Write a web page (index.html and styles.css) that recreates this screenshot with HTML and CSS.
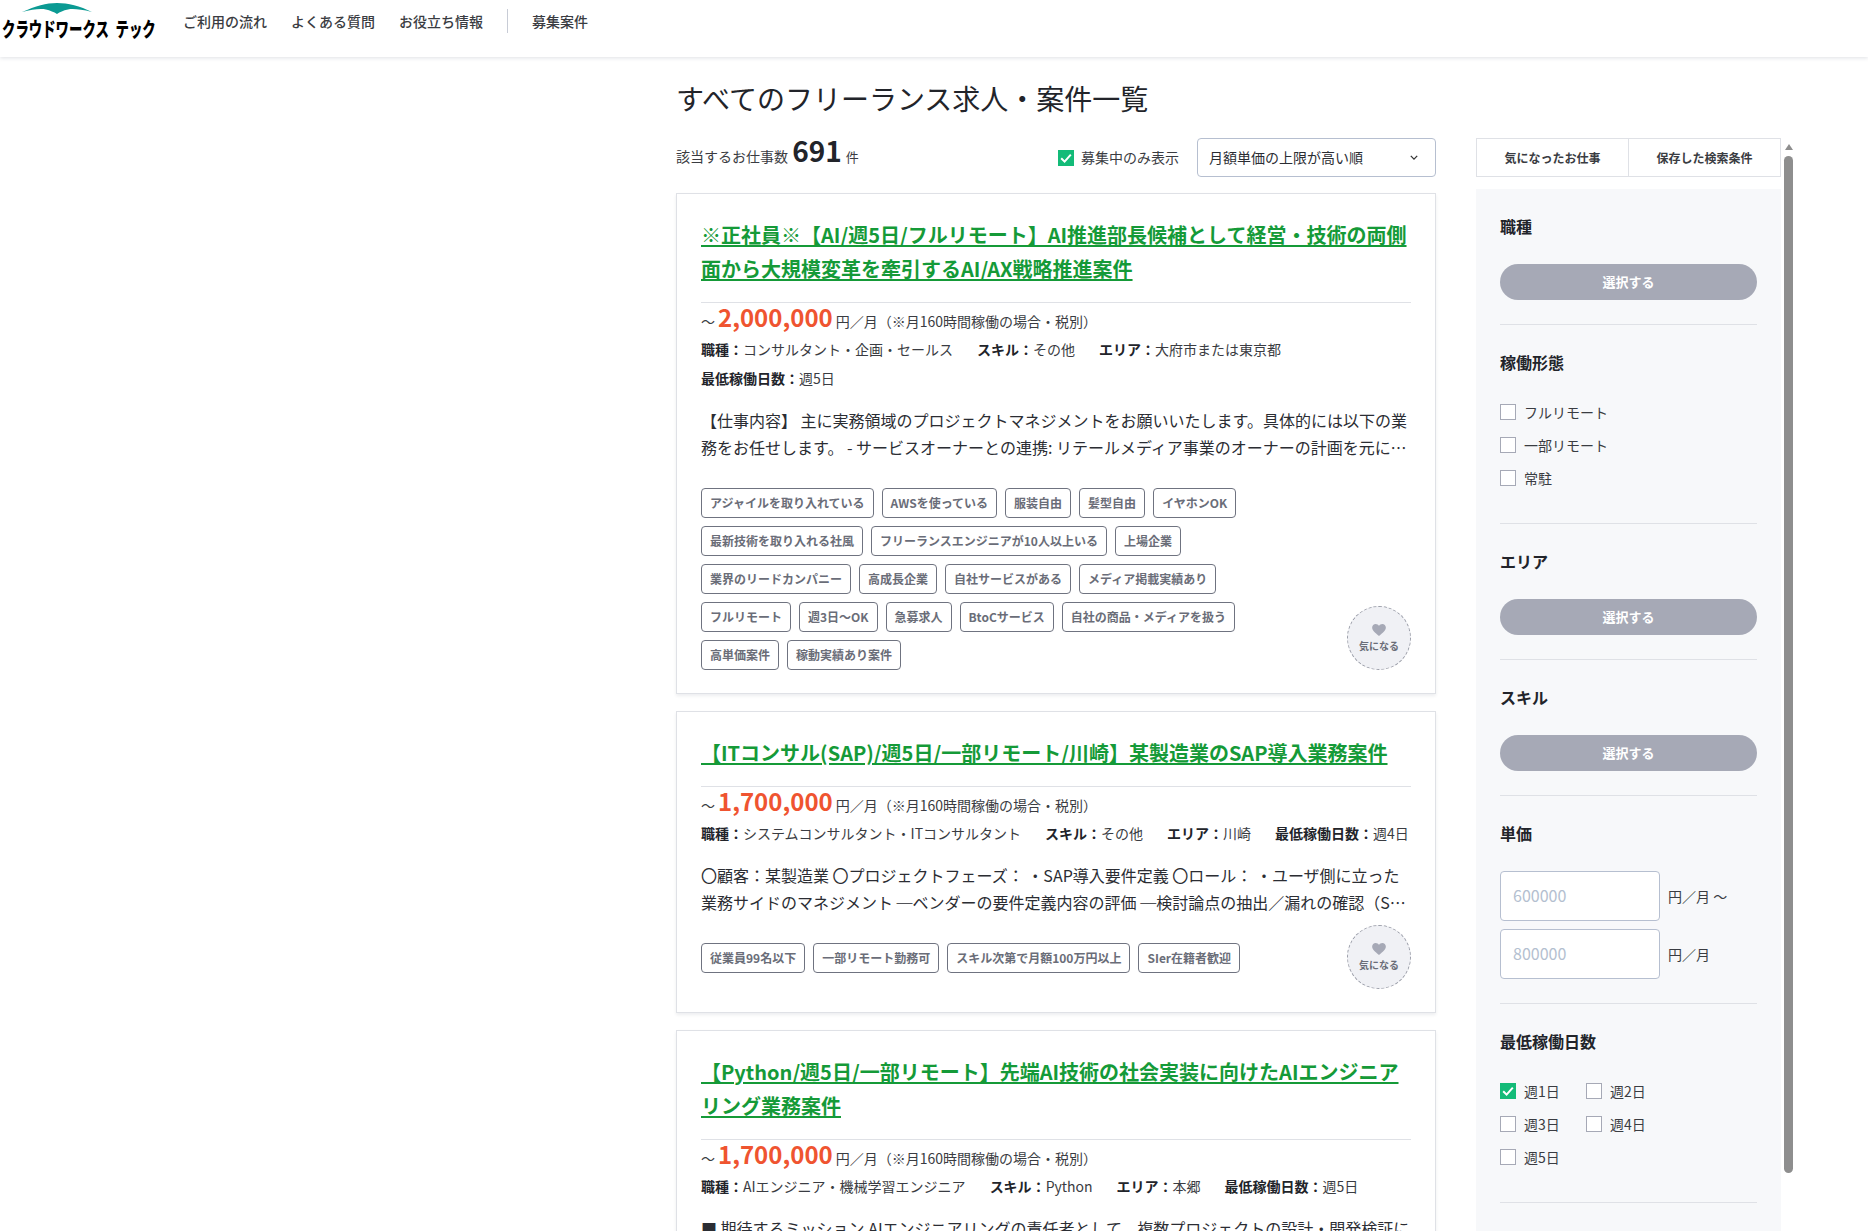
FILE: index.html
```html
<!DOCTYPE html>
<html lang="ja">
<head>
<meta charset="utf-8">
<title>すべてのフリーランス求人・案件一覧</title>
<link rel="stylesheet" href="styles.css">
</head>
<body>
<header class="header">
  <a class="logo">
    <svg class="logo-arc" viewBox="0 0 70 11" width="70" height="11"><path d="M0 9 C14 3 24 0 35 0 C46 0 58 3 70 9 C58 6 50 5.500 46 6.500 C41 7.500 38 9 35 11 C32 9 28 7.500 24 6.500 C18 5.500 10 6.500 0 9Z" fill="#0b9a93"/></svg>
    <span class="logo-text">クラウドワークス<span class="logo-gap">テック</span></span>
  </a>
  <nav class="nav">
    <a>ご利用の流れ</a><a>よくある質問</a><a>お役立ち情報</a><span class="nav-sep"></span><a>募集案件</a>
  </nav>
</header>
<div class="layout">
  <main class="main">
    <h1 class="page-title">すべてのフリーランス求人・案件一覧</h1>
    <div class="toolbar">
      <div class="count">該当するお仕事数 <b>691</b> <small>件</small></div>
      <label class="only-open"><span class="box on"><svg viewBox="0 0 16 16"><path d="M3.2 8.2 6.6 11.6 12.8 4.6" fill="none" stroke="#fff" stroke-width="2"/></svg></span><span class="lift">募集中のみ表示</span></label>
      <div class="select"><span class="lift">月額単価の上限が高い順</span><svg viewBox="0 0 10 6" width="8" height="5"><path d="M1 1 5 5 9 1" fill="none" stroke="#333" stroke-width="1.6"/></svg></div>
    </div>

    <article class="card">
      <h2 class="job-title"><a>※正社員※【AI/週5日/フルリモート】AI推進部長候補として経営・技術の両側面から大規模変革を牽引するAI/AX戦略推進案件</a></h2>
      <p class="price">〜<b>2,000,000</b><span>円／月（※月160時間稼働の場合・税別）</span></p>
      <ul class="meta"><li><b>職種：</b>コンサルタント・企画・セールス</li><li><b>スキル：</b>その他</li><li><b>エリア：</b>大府市または東京都</li><li><b>最低稼働日数：</b>週5日</li></ul>
      <p class="desc">【仕事内容】 主に実務領域のプロジェクトマネジメントをお願いいたします。具体的には以下の業務をお任せします。 - サービスオーナーとの連携: リテールメディア事業のオーナーの計画を元に、開発チームと連携して進めていただきます。</p>
      <div class="tags"><span>アジャイルを取り入れている</span><span>AWSを使っている</span><span>服装自由</span><span>髪型自由</span><span>イヤホンOK</span><span>最新技術を取り入れる社風</span><span>フリーランスエンジニアが10人以上いる</span><span>上場企業</span><span>業界のリードカンパニー</span><span>高成長企業</span><span>自社サービスがある</span><span>メディア掲載実績あり</span><span>フルリモート</span><span>週3日〜OK</span><span>急募求人</span><span>BtoCサービス</span><span>自社の商品・メディアを扱う</span><span>高単価案件</span><span>稼動実績あり案件</span></div>
      <button class="fav"><svg viewBox="0 0 16 14" width="14" height="12"><path d="M8 14C3 10 0 7.500 0 4.200 0 1.800 1.900 0 4.100 0 5.700 0 7.200.8 8 2.200 8.800.8 10.300 0 11.900 0 14.100 0 16 1.800 16 4.200 16 7.500 13 10 8 14Z" fill="#a6a9b6"/></svg><span>気になる</span></button>
    </article>

    <article class="card">
      <h2 class="job-title"><a>【ITコンサル(SAP)/週5日/一部リモート/川崎】某製造業のSAP導入業務案件</a></h2>
      <p class="price">〜<b>1,700,000</b><span>円／月（※月160時間稼働の場合・税別）</span></p>
      <ul class="meta"><li><b>職種：</b>システムコンサルタント・ITコンサルタント</li><li><b>スキル：</b>その他</li><li><b>エリア：</b>川崎</li><li><b>最低稼働日数：</b>週4日</li></ul>
      <p class="desc">〇顧客：某製造業 〇プロジェクトフェーズ： ・SAP導入要件定義 〇ロール： ・ユーザ側に立った業務サイドのマネジメント ─ベンダーの要件定義内容の評価 ─検討論点の抽出／漏れの確認（SAP標準機能との適合性の確認を含みます）</p>
      <div class="tags"><span>従業員99名以下</span><span>一部リモート勤務可</span><span>スキル次第で月額100万円以上</span><span>SIer在籍者歓迎</span></div>
      <button class="fav"><svg viewBox="0 0 16 14" width="14" height="12"><path d="M8 14C3 10 0 7.500 0 4.200 0 1.800 1.900 0 4.100 0 5.700 0 7.200.8 8 2.200 8.800.8 10.300 0 11.900 0 14.100 0 16 1.800 16 4.200 16 7.500 13 10 8 14Z" fill="#a6a9b6"/></svg><span>気になる</span></button>
    </article>

    <article class="card">
      <h2 class="job-title"><a>【Python/週5日/一部リモート】先端AI技術の社会実装に向けたAIエンジニアリング業務案件</a></h2>
      <p class="price">〜<b>1,700,000</b><span>円／月（※月160時間稼働の場合・税別）</span></p>
      <ul class="meta"><li><b>職種：</b>AIエンジニア・機械学習エンジニア</li><li><b>スキル：</b>Python</li><li><b>エリア：</b>本郷</li><li><b>最低稼働日数：</b>週5日</li></ul>
      <p class="desc">■ 期待するミッション AIエンジニアリングの責任者として、複数プロジェクトの設計・開発検証に携わっていただきます。</p>
    </article>
  </main>

  <aside class="side">
    <div class="side-col">
      <div class="tabs"><a>気になったお仕事</a><a>保存した検索条件</a></div>
      <form class="panel">
        <section class="sec"><h3>職種</h3><button type="button" class="pick">選択する</button></section>
        <section class="sec"><h3>稼働形態</h3>
          <div class="checks"><label><span class="box"></span>フルリモート</label><label><span class="box"></span>一部リモート</label><label><span class="box"></span>常駐</label></div>
        </section>
        <section class="sec"><h3>エリア</h3><button type="button" class="pick">選択する</button></section>
        <section class="sec"><h3>スキル</h3><button type="button" class="pick">選択する</button></section>
        <section class="sec"><h3>単価</h3>
          <div class="price-row"><span class="input">600000</span>円／月 〜</div>
          <div class="price-row"><span class="input">800000</span>円／月</div>
        </section>
        <section class="sec"><h3>最低稼働日数</h3>
          <div class="checks days">
            <label><span class="box on"><svg viewBox="0 0 16 16"><path d="M3.200 8.200 6.600 11.600 12.800 4.600" fill="none" stroke="#fff" stroke-width="2"/></svg></span>週1日</label><label><span class="box"></span>週2日</label>
            <label><span class="box"></span>週3日</label><label><span class="box"></span>週4日</label>
            <label><span class="box"></span>週5日</label>
          </div>
        </section>
      </form>
    </div>
    <div class="scrollbar"><span class="arrow"></span><span class="thumb"></span></div>
  </aside>
</div>
</body>
</html>
```
FILE: styles.css
```css
* { box-sizing: border-box; }
html, body { margin: 0; height: 1231px; overflow: hidden; background: #fff; }
body { font-family: "Noto Sans CJK JP", "Noto Sans", sans-serif; color: #2b2d33; font-size: 14px; }
h1, h2, h3, p, ul { margin: 0; padding: 0; list-style: none; font-weight: inherit; }

.header { height: 57px; display: flex; align-items: flex-start; background: #fff; box-shadow: 0 1px 4px rgba(30, 40, 70, .14); }
.logo { width: 183px; height: 57px; padding: 3px 0 0 2px; display: flex; flex-direction: column; flex: none; }
.logo-arc { margin-left: 20px; display: block; }
.logo-text { font-size: 20px; line-height: 24px; margin-top: 3px; font-weight: 900; color: #000; transform: scaleX(.67); transform-origin: left center; white-space: nowrap; }
.logo-gap { margin-left: 10px; }
.nav { display: flex; align-items: center; gap: 24px; font-size: 14px; font-weight: 500; color: #3a3c42; height: 42px; }
.nav-sep { width: 1px; height: 24px; background: #c8ccd6; }

.layout { display: flex; padding-left: 676px; }
.main { width: 760px; flex: none; }
.page-title { font-size: 28px; line-height: 40px; margin-top: 21px; font-weight: 400; color: #22242a; }
.toolbar { display: flex; align-items: center; height: 39px; margin-top: 20px; }
.count { flex: 1; font-size: 14px; color: #3a3c42; padding-bottom: 16px; }
.count b { font-size: 28px; line-height: 34px; font-weight: 700; color: #22242a; margin: 0 1px; }
.count small { font-size: 13px; }
.only-open { display: flex; align-items: center; gap: 7px; margin-right: 18px; color: #3a3c42; }
.lift { padding-bottom: 2px; }
.box { width: 16px; height: 16px; border: 1px solid #a6a9b6; background: #fff; display: block; flex: none; }
.box.on { background: #13bb78; border: 0; }
.box svg { display: block; width: 16px; height: 16px; }
.select { width: 239px; height: 39px; border: 1px solid #b6bfd0; border-radius: 4px; display: flex; align-items: center; justify-content: space-between; padding: 0 17px 0 11px; color: #2b2d33; }

.card { position: relative; margin-top: 17px; padding: 24px 24px 23px; border: 1px solid #dfe1e6; box-shadow: 0 2px 3px rgba(30, 40, 70, .08); background: #fff; }
.toolbar + .card { margin-top: 16px; }
.job-title { font-size: 20px; line-height: 34px; font-weight: 700; padding-bottom: 16px; border-bottom: 1px solid #dfe1e6; color: #159a38; }
.job-title a { text-decoration: underline; text-underline-offset: 2px; }
.price { height: 28px; line-height: 28px; display: flex; align-items: baseline; font-size: 14px; color: #3a3c42; }
.price b { font-size: 24px; font-weight: 700; color: #ef5430; margin: 0 3px; }
.meta { display: flex; flex-wrap: wrap; gap: 1px 24px; margin-top: 4px; }
.meta li { line-height: 28px; font-size: 14px; color: #3a3c42; }
.meta b { font-weight: 700; color: #22242a; }
.desc { margin-top: 15px; font-size: 16px; line-height: 27.200px; color: #2b2d33; display: -webkit-box; -webkit-line-clamp: 2; -webkit-box-orient: vertical; overflow: hidden; }
.tags { margin-top: 26.600px; min-height: 46px; max-width: 600px; display: flex; flex-wrap: wrap; gap: 8px; align-content: flex-start; }
.tags span { height: 30px; padding: 0 8px; border: 1px solid #6f7380; border-radius: 4px; font-size: 12px; line-height: 28px; font-weight: 700; color: #6a6d78; white-space: nowrap; }
.fav { position: absolute; right: 24px; bottom: 23px; width: 64px; height: 64px; padding: 0; border: 1px dashed #9a9da8; border-radius: 50%; background: #f0f1f5; display: flex; flex-direction: column; align-items: center; justify-content: center; font-family: inherit; font-size: 10px; font-weight: 700; line-height: 14px; color: #6a6d78; gap: 3px; }

.side { display: flex; margin-left: 40px; margin-top: 81px; flex: none; height: 1150px; }
.side-col { width: 305px; display: flex; flex-direction: column; }
.tabs { display: flex; height: 39px; border: 1px solid #dfe1e6; font-size: 12px; font-weight: 700; color: #3a3c42; }
.tabs a { flex: 1; display: flex; align-items: center; justify-content: center; }
.tabs a + a { border-left: 1px solid #dfe1e6; }
.panel { margin-top: 12px; flex: 1; background: #f7f8fa; padding: 24px; }
.sec { border-bottom: 1px solid #dfe1e6; padding-bottom: 24px; margin-bottom: 24px; }
.sec h3 { font-size: 16px; line-height: 26px; font-weight: 700; color: #22242a; margin-bottom: 25px; }
.pick { display: block; width: 100%; height: 36px; padding: 0 0 2px; border: 0; border-radius: 18px; background: #a6a9b6; color: #fff; font-family: inherit; font-size: 13px; font-weight: 700; }
.checks { display: flex; flex-direction: column; gap: 17px; padding: 4px 0 13px; }
.checks label { display: flex; align-items: center; gap: 8px; height: 16px; font-size: 14px; color: #3a3c42; }
.days { display: grid; grid-template-columns: 86px 86px; gap: 17px 0; justify-content: start; }
.price-row { display: flex; align-items: center; gap: 8px; font-size: 14px; color: #3a3c42; }
.price-row + .price-row { margin-top: 8px; }
.input { width: 160px; height: 50px; padding: 0 12px; border: 1px solid #b6bfd0; border-radius: 4px; background: #fff; color: #b4bfd0; font-size: 16px; line-height: 47px; }
.scrollbar { width: 9px; margin-left: 3px; display: flex; flex-direction: column; align-items: center; height: 1035px; }
.arrow { width: 0; height: 0; margin-top: 6px; border: 4px solid transparent; border-top: 0; border-bottom: 6px solid #8e8e8e; }
.thumb { width: 9px; flex: 1; margin-top: 6px; border-radius: 5px; background: #8e8e8e; }
```
